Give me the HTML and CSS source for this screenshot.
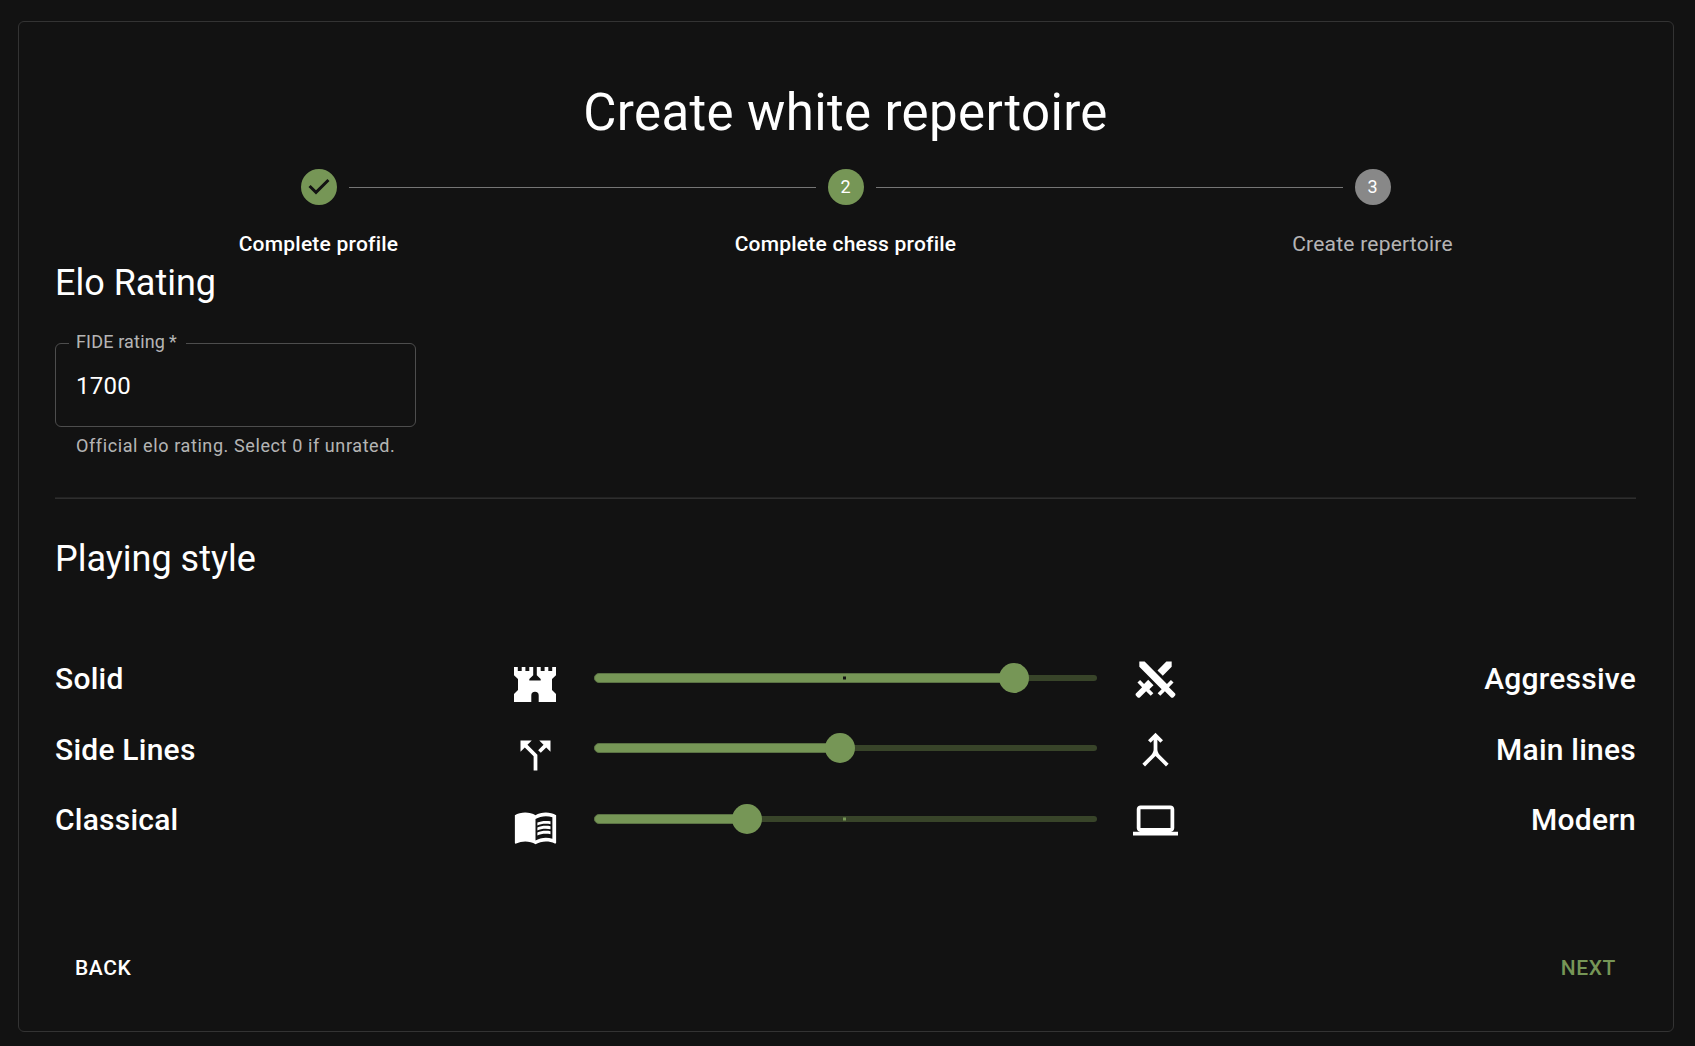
FILE: index.html
```html
<!DOCTYPE html>
<html lang="en">
<head>
<meta charset="utf-8">
<title>Create white repertoire</title>
<link rel="stylesheet" href="styles.css">
</head>
<body>
<main class="card">
  <h1 class="title">Create white repertoire</h1>
  <ol class="stepper">
    <li class="step">
      <div class="step-head">
        <svg class="step-icon" viewBox="0 0 24 24"><path d="M12 0a12 12 0 1 0 0 24 12 12 0 1 0 0-24zm-2 17l-5-5 1.4-1.4 3.6 3.6 7.6-7.6L19 8l-9 9z"/></svg>
      </div>
      <span class="step-label">Complete profile</span>
    </li>
    <li class="step">
      <div class="step-head"><span class="step-line"></span><span class="step-num">2</span></div>
      <span class="step-label">Complete chess profile</span>
    </li>
    <li class="step pending">
      <div class="step-head"><span class="step-line"></span><span class="step-num">3</span></div>
      <span class="step-label">Create repertoire</span>
    </li>
  </ol>

  <h2 class="section-title">Elo Rating</h2>
  <fieldset class="field">
    <legend class="field-label">FIDE rating&thinsp;*</legend>
    <span class="field-value">1700</span>
  </fieldset>
  <p class="helper">Official elo rating. Select 0 if unrated.</p>
  <hr class="divider">

  <h2 class="section-title">Playing style</h2>
  <div class="styles">
    <div class="row">
      <span class="name">Solid</span>
      <svg class="icon icon-left icon-rook" viewBox="0 0 42 35"><path d="M0 0h3.800v4h3.900V0h3.700v4h3.900V0H19.200v8.300L15.300 12v1.500h11.400V12l-3.900-3.700V0h3.900v4h3.900V0h3.700v4h3.900V0H42v8.300L38 12v11l4 4v8H24.700v-6.500a3.700 3.700 0 0 0-7.400 0V35H0v-8l4-4V12L0 8.300z"/></svg>
      <div class="slider"><span class="rail"></span><span class="track" style="width:83.5%"></span><span class="mark dark"></span><span class="thumb" style="left:83.5%"></span></div>
      <svg class="icon" viewBox="0 0 24 24"><path d="M6.2,2.44L18.1,14.34L20.22,12.22L21.63,13.63L19.16,16.1L22.34,19.28C22.73,19.67 22.73,20.3 22.34,20.69L21.63,21.4C21.24,21.79 20.61,21.79 20.22,21.4L17,18.23L14.56,20.7L13.15,19.28L15.27,17.16L3.37,5.26V2.44H6.2M15.89,10L20.63,5.26V2.44H17.8L13.06,7.18L15.89,10M10.94,15L8.11,12.13L5.9,14.34L3.78,12.22L2.37,13.63L4.84,16.1L1.66,19.29C1.27,19.68 1.27,20.31 1.66,20.7L2.37,21.41C2.76,21.8 3.39,21.8 3.78,21.41L7,18.23L9.44,20.7L10.85,19.28L8.73,17.16L10.94,15Z"/></svg>
      <span class="name end">Aggressive</span>
    </div>
    <div class="row">
      <span class="name">Side Lines</span>
      <svg class="icon icon-left" viewBox="0 0 24 24"><path d="M14 4l2.290 2.290-2.880 2.880 1.420 1.420 2.880-2.880L20 10V4zm-4 0H4v6l2.290-2.290 4.710 4.700V20h2v-8.410l-5.290-5.300z"/></svg>
      <div class="slider"><span class="rail"></span><span class="track" style="width:48.9%"></span><span class="thumb" style="left:48.9%"></span></div>
      <svg class="icon" viewBox="0 0 24 24"><path d="M6.410 21L5 19.590l4.830-4.830c.75-.75 1.170-1.770 1.170-2.830v-5.100L9.410 8.410 8 7l4-4 4 4-1.410 1.410L13 6.830v5.100c0 1.060.42 2.080 1.170 2.830L19 19.590 17.590 21 12 15.410z"/></svg>
      <span class="name end">Main lines</span>
    </div>
    <div class="row">
      <span class="name">Classical</span>
      <svg class="icon icon-left" viewBox="0 0 24 24"><path d="M17.500 4.500c-1.950 0-4.050.4-5.500 1.500-1.450-1.100-3.550-1.500-5.500-1.500S2.450 4.900 1 6v14.650c0 .35.35.5.5.5.1 0 .15-.05.25-.05C3.100 20.450 5.050 20 6.500 20c1.950 0 4.050.4 5.500 1.500 1.350-.85 3.800-1.500 5.500-1.500 1.650 0 3.350.3 4.750 1.050.1.050.15.050.25.050.25 0 .5-.25.5-.5V6c-1.500-1.100-3.550-1.500-5.500-1.500zM21 18.500c-1.100-.35-2.300-.5-3.500-.5-1.700 0-4.150.65-5.500 1.500V8c1.350-.85 3.800-1.500 5.500-1.500 1.200 0 2.400.15 3.500.5z"/><path d="M17.500 10.500c.88 0 1.730.09 2.500.26V9.240c-.79-.15-1.640-.24-2.500-.24-1.700 0-3.240.29-4.500.83v1.660c1.130-.64 2.700-.99 4.500-.99zM13 12.490v1.660c1.130-.64 2.700-.99 4.500-.99.88 0 1.730.09 2.500.26V11.900c-.79-.15-1.640-.24-2.500-.24-1.700 0-3.240.3-4.500.83zM17.500 14.330c-1.700 0-3.240.29-4.500.83v1.660c1.130-.64 2.700-.99 4.500-.99.88 0 1.730.09 2.500.26v-1.520c-.79-.16-1.640-.24-2.500-.24z"/></svg>
      <div class="slider"><span class="rail"></span><span class="track" style="width:30.4%"></span><span class="mark"></span><span class="thumb" style="left:30.4%"></span></div>
      <svg class="icon" viewBox="0 0 24 24"><path d="M20 18c1.100 0 2-.9 2-2V6c0-1.100-.9-2-2-2H4c-1.100 0-2 .9-2 2v10c0 1.100.9 2 2 2H0v2h24v-2zM4 6h16v10H4z"/></svg>
      <span class="name end">Modern</span>
    </div>
  </div>

  <div class="actions">
    <button class="btn">BACK</button>
    <button class="btn primary">NEXT</button>
  </div>
</main>
</body>
</html>
```
FILE: styles.css
```css
* { box-sizing: border-box; }
body {
  margin: 0;
  padding: 21px 21px 14px 18px;
  background: #121212;
  color: #fff;
  font-family: Roboto, "Liberation Sans", sans-serif;
}
.card {
  height: 1011px;
  padding: 59px 37px 0 36px;
  border: 1px solid #333;
  border-radius: 6px;
}
.title {
  margin: 0;
  font-size: 51px;
  font-weight: 400;
  line-height: 63px;
  letter-spacing: 0.00735em;
  text-align: center;
}
.stepper {
  display: flex;
  margin: 25px 0 0;
  padding: 0;
  list-style: none;
}
.step { flex: 1; text-align: center; }
.step-head {
  position: relative;
  display: flex;
  justify-content: center;
  height: 36px;
  margin-bottom: 24px;
}
.step-icon { width: 36px; height: 36px; fill: #769656; }
.step-num {
  width: 36px;
  height: 36px;
  border-radius: 50%;
  background: #769656;
  font-size: 18px;
  line-height: 36px;
}
.pending .step-num { background: #888; }
.step-line {
  position: absolute;
  top: 18px;
  left: calc(-50% + 30px);
  right: calc(50% + 30px);
  height: 1px;
  background: #757575;
}
.step-label {
  display: block;
  font-size: 21px;
  font-weight: 500;
  line-height: 30px;
  letter-spacing: 0.01071em;
}
.pending .step-label { color: rgba(255, 255, 255, 0.7); font-weight: 400; }
.section-title {
  margin: 0;
  font-size: 36px;
  font-weight: 400;
  line-height: 48px;
}
.field {
  width: 361px;
  height: 94px;
  margin: 26px 0 0;
  padding: 0 20px 0 13px;
  border: 1px solid #4d4d4d;
  border-radius: 6px;
}
.field-label {
  height: 21px;
  padding: 0 9px 0 7px;
  color: rgba(255, 255, 255, 0.7);
  font-size: 18px;
  line-height: 18px;
  letter-spacing: 0.00938em;
}
.field-value {
  display: block;
  padding-left: 7px;
  font-size: 24px;
  line-height: 64px;
  letter-spacing: 0.00938em;
}
.helper {
  margin: 4px 21px 0;
  color: rgba(255, 255, 255, 0.7);
  font-size: 18px;
  line-height: 30px;
  letter-spacing: 0.03333em;
}
.divider {
  height: 2px;
  margin: 36px 0;
  border: 0;
  border-top: 1px solid #222;
  background: #2e2e2e;
}
.styles { margin-top: 61px; }
.row {
  display: grid;
  grid-template-columns: 423px 116px 503px 116px 1fr;
  align-items: center;
  height: 70.5px;
}
.name {
  font-size: 30px;
  font-weight: 500;
  line-height: 48px;
  letter-spacing: 0.0075em;
}
.end { text-align: right; }
.icon { width: 45px; height: 45px; fill: #fff; justify-self: center; }
.slider { position: relative; height: 30px; margin-top: -3px; color: #769656; }
.rail, .track, .thumb, .mark { position: absolute; top: 50%; transform: translateY(-50%); }
.rail {
  left: 0;
  width: 100%;
  height: 6px;
  border-radius: 3px;
  background: #384429;
}
.track {
  left: 0;
  height: 10px;
  border: 1px solid #5b7244;
  border-radius: 5px;
  background: #769656;
}
.mark { left: 50%; width: 3px; height: 3px; margin-left: -2.5px; background: #769656; }
.mark.dark { background: #121212; }
.thumb {
  width: 30px;
  height: 30px;
  margin-left: -15px;
  border-radius: 50%;
  background: #769656;
}
.icon-left { margin: 12px 2px 0 0; }
.icon-rook { width: 42px; height: 35px; margin-top: 11px; }
.actions { display: flex; justify-content: space-between; margin-top: 85px; }
.btn {
  padding: 9px 20px;
  border: 0;
  background: none;
  color: #fff;
  font: 500 21px/36px Roboto, "Liberation Sans", sans-serif;
  letter-spacing: 0.02857em;
}
.primary { color: #769656; }
```
